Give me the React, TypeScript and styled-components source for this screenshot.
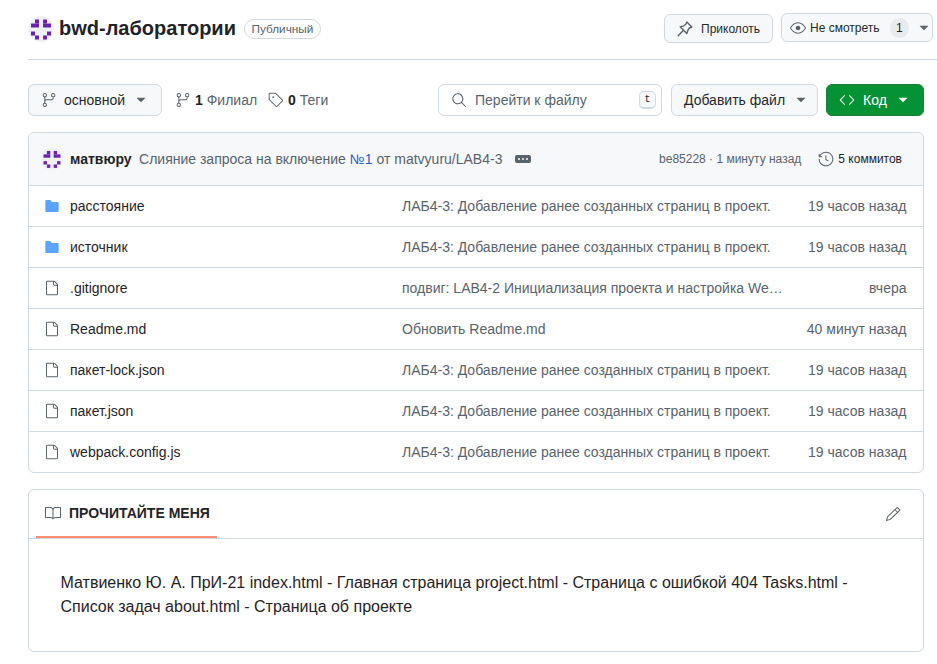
import React from "react";
import styled, { createGlobalStyle } from "styled-components";
import {
  GoEye, GoGitBranch, GoTag, GoSearch, GoCode, GoHistory, GoBook, GoPencil,
  GoFile, GoFileDirectoryFill, GoKebabHorizontal, GoTriangleDown,
} from "react-icons/go";

const Global = createGlobalStyle`
  html, body { margin: 0; padding: 0; background: #fff; }
  body { font-family: "Liberation Sans", Arial, sans-serif; font-size: 14px; color: #1f2328; overflow: hidden; }
  * { box-sizing: border-box; }
`;

const Page = styled.div`
  width: 937px;
  height: 664px;
  padding-left: 28px;
`;

const Header = styled.header`
  height: 60px;
  padding-right: 4px;
  border-bottom: 1px solid #d1d9e0;
  display: flex;
  align-items: flex-start;
  justify-content: space-between;
`;

const TitleGroup = styled.div`
  display: flex;
  align-items: center;
  height: 29px;
  margin-top: 14px;
`;

const AvatarCircle = styled.svg<{ $size: number }>`
  width: ${(p) => p.$size}px;
  height: ${(p) => p.$size}px;
  border-radius: 50%;
  flex: none;
`;

const RepoName = styled.h1`
  font-size: 20px;
  font-weight: 700;
  margin: 0 0 0 5px;
  color: #1f2328;
`;

const Badge = styled.span`
  margin-left: 8px;
  height: 20px;
  padding: 0 6.5px;
  border: 1px solid #d1d9e0;
  border-radius: 10px;
  font-size: 11.8px;
  line-height: 18px;
  color: #59636e;
`;

const HeaderActions = styled.div`
  display: flex;
  gap: 8px;
  margin-top: 13px;
  align-items: flex-start;
`;

const SmallButton = styled.div<{ $width: number; $top?: number }>`
  width: ${(p) => p.$width}px;
  height: 29px;
  margin-top: ${(p) => p.$top ?? 0}px;
  background: #f6f8fa;
  border: 1px solid #d1d9e0;
  border-radius: 6px;
  display: flex;
  align-items: center;
  white-space: nowrap;
  font-size: 12px;
  color: #25292e;
  svg { color: #59636e; flex: none; }
`;

const PinIcon = styled.svg`
  width: 16px;
  height: 16px;
  margin: 0 8px 0 12px;
`;

const Counter = styled.span`
  width: 20px;
  height: 20px;
  border-radius: 10px;
  background: #e8eaee;
  font-size: 12px;
  text-align: center;
  line-height: 20px;
`;

const Toolbar = styled.div`
  height: 32px;
  margin-top: 24px;
  padding-right: 13px;
  display: flex;
  align-items: center;
`;

const Button = styled.div<{ $width: number; $primary?: boolean }>`
  width: ${(p) => p.$width}px;
  height: 32px;
  flex: none;
  border-radius: 6px;
  border: 1px solid ${(p) => (p.$primary ? "#1a7f37" : "#d1d9e0")};
  background: ${(p) => (p.$primary ? "#059235" : "#f6f8fa")};
  color: ${(p) => (p.$primary ? "#fff" : "#25292e")};
  display: flex;
  align-items: center;
  white-space: nowrap;
  svg { flex: none; color: ${(p) => (p.$primary ? "#fff" : "#59636e")}; }
`;

const Stat = styled.div`
  display: flex;
  align-items: center;
  color: #59636e;
  gap: 4px;
  strong { color: #1f2328; font-weight: 700; }
  svg { flex: none; }
`;

const Spacer = styled.div`
  flex: 1;
`;

const Search = styled.div`
  width: 224px;
  height: 32px;
  margin-right: 9px;
  border: 1px solid #d1d9e0;
  border-radius: 6px;
  display: flex;
  align-items: center;
  padding: 0 5px 0 12px;
  color: #59636e;
  gap: 8px;
`;

const Kbd = styled.kbd`
  width: 17px;
  height: 18px;
  margin-left: auto;
  border: 1px solid #d1d9e0;
  border-bottom-width: 2px;
  border-radius: 5px;
  background: #f6f8fa;
  font: 10px/15px "Liberation Mono", monospace;
  text-align: center;
  color: #1f2328;
`;

const FileBox = styled.section`
  width: 896px;
  margin-top: 16px;
  border: 1px solid #d1d9e0;
  border-radius: 6px;
  overflow: hidden;
`;

const CommitBar = styled.div`
  height: 52px;
  background: #f6f8fa;
  display: flex;
  align-items: center;
  padding: 0 21px 0 12px;
  font-size: 14px;
  color: #59636e;
`;

const Author = styled.strong`
  margin-left: 7px;
  color: #1f2328;
  font-size: 14px;
  font-weight: 700;
`;

const CommitMessage = styled.span`
  margin-left: 7.5px;
  a { color: #2f5fd0; }
`;

const Ellipsis = styled.span`
  margin-left: 13px;
  width: 16px;
  height: 8px;
  border-radius: 2px;
  background: #59636e;
  display: flex;
  align-items: center;
  justify-content: center;
  color: #fff;
`;

const CommitMeta = styled.span`
  margin-left: auto;
  font-size: 12px;
`;

const History = styled.span`
  margin-left: 17px;
  display: flex;
  align-items: center;
  gap: 4px;
  color: #1f2328;
  font-size: 12px;
  svg { color: #59636e; }
`;

const Row = styled.div`
  height: 41px;
  border-top: 1px solid #d1d9e0;
  display: grid;
  grid-template-columns: 26px 332px 381px 1fr;
  align-items: center;
  padding: 0 16.5px 0 15px;
`;

const IconCell = styled.span<{ $folder?: boolean }>`
  display: flex;
  color: ${(p) => (p.$folder ? "#5ba3ff" : "#59636e")};
`;

const Name = styled.span`
  color: #1f2328;
`;

const Message = styled.span`
  color: #59636e;
  white-space: nowrap;
`;

const Time = styled.span`
  color: #59636e;
  text-align: right;
  white-space: nowrap;
`;

const Readme = styled.section`
  width: 896px;
  height: 163px;
  margin-top: 16px;
  border: 1px solid #d1d9e0;
  border-radius: 6px;
`;

const ReadmeHead = styled.div`
  height: 49px;
  border-bottom: 1px solid #d1d9e0;
  display: flex;
  justify-content: space-between;
  align-items: stretch;
  padding: 0 22px 0 7px;
`;

const ReadmeTab = styled.div`
  width: 181px;
  height: 48px;
  padding-left: 9px;
  display: flex;
  align-items: center;
  gap: 8px;
  border-bottom: 2px solid #fd8c73;
  font-size: 14px;
  font-weight: 700;
  color: #1f2328;
  svg { color: #59636e; flex: none; }
`;

const EditIcon = styled.span`
  display: flex;
  align-items: center;
  color: #59636e;
`;

const ReadmeBody = styled.p`
  margin: 0;
  padding: 32px 31px 0 31.5px;
  font-size: 16px;
  line-height: 24px;
  color: #1f2328;
`;

const Caret = styled(GoTriangleDown)<{ $gap: number }>`
  margin-left: ${(p) => p.$gap}px;
`;

const Identicon = ({ size }: { size: number }) => {
  const cells = [
    [1, 0], [3, 0],
    [0, 1], [1, 1], [3, 1], [4, 1],
    [0, 3], [4, 3],
    [1, 4], [3, 4],
  ];
  return (
    <AvatarCircle $size={size} viewBox="0 0 26 26">
      <rect width="26" height="26" fill="#eff0f3" />
      {cells.map(([x, y]) => (
        <rect key={`${x}-${y}`} x={3 + x * 4} y={3.5 + y * 4} width="4" height="4" fill="#6a22b4" />
      ))}
    </AvatarCircle>
  );
};

const rows = [
  ["folder", "расстояние", "ЛАБ4-3: Добавление ранее созданных страниц в проект.", "19 часов назад"],
  ["folder", "источник", "ЛАБ4-3: Добавление ранее созданных страниц в проект.", "19 часов назад"],
  ["file", ".gitignore", "подвиг: LAB4-2 Инициализация проекта и настройка We…", "вчера"],
  ["file", "Readme.md", "Обновить Readme.md", "40 минут назад"],
  ["file", "пакет-lock.json", "ЛАБ4-3: Добавление ранее созданных страниц в проект.", "19 часов назад"],
  ["file", "пакет.json", "ЛАБ4-3: Добавление ранее созданных страниц в проект.", "19 часов назад"],
  ["file", "webpack.config.js", "ЛАБ4-3: Добавление ранее созданных страниц в проект.", "19 часов назад"],
];

export default function App() {
  return (
    <Page>
      <Global />
      <Header>
        <TitleGroup>
          <Identicon size={26} />
          <RepoName>bwd-лаборатории</RepoName>
          <Badge>Публичный</Badge>
        </TitleGroup>
        <HeaderActions>
          <SmallButton $width={109} $top={1}>
            <PinIcon viewBox="0 0 16 16" fill="none" stroke="currentColor" strokeWidth="1.4" strokeLinejoin="round" strokeLinecap="round">
              <path d="M9.8 1 14.8 6 12.5 7 11 9 9.8 12.5 3.2 5.8 6.8 4.8 8.8 3.2Z" />
              <path d="M6.3 9.5 1.2 14.8" />
            </PinIcon>
            Приколоть
          </SmallButton>
          <SmallButton $width={152}>
            <GoEye size={16} style={{ marginLeft: 8, marginRight: 4 }} />
            Не смотреть
            <Counter style={{ marginLeft: 10 }}>1</Counter>
            <Caret size={16} $gap={7} />
          </SmallButton>
        </HeaderActions>
      </Header>
      <Toolbar>
        <Button $width={134}>
          <GoGitBranch size={16} style={{ marginLeft: 12, marginRight: 7 }} />
          основной
          <Caret size={16} $gap={8} />
        </Button>
        <Stat style={{ marginLeft: 13 }}>
          <GoGitBranch size={16} />
          <span><strong>1</strong> Филиал</span>
        </Stat>
        <Stat style={{ marginLeft: 11 }}>
          <GoTag size={16} />
          <span><strong>0</strong> Теги</span>
        </Stat>
        <Spacer />
        <Search>
          <GoSearch size={16} />
          Перейти к файлу
          <Kbd>t</Kbd>
        </Search>
        <Button $width={147}>
          <span style={{ marginLeft: 12 }}>Добавить файл</span>
          <Caret size={16} $gap={8} />
        </Button>
        <Button $width={98} $primary style={{ marginLeft: 8 }}>
          <GoCode size={16} style={{ marginLeft: 12, marginRight: 8 }} />
          Код
          <Caret size={16} $gap={8} />
        </Button>
      </Toolbar>
      <FileBox>
        <CommitBar>
          <Identicon size={22} />
          <Author>матвюру</Author>
          <CommitMessage>
            Слияние запроса на включение <a>№1</a> от matvyuru/LAB4-3
          </CommitMessage>
          <Ellipsis>
            <GoKebabHorizontal size={12} />
          </Ellipsis>
          <CommitMeta>be85228 · 1 минуту назад</CommitMeta>
          <History>
            <GoHistory size={16} />
            5 коммитов
          </History>
        </CommitBar>
        {rows.map(([kind, name, msg, time]) => (
          <Row key={name}>
            <IconCell $folder={kind === "folder"}>
              {kind === "folder" ? <GoFileDirectoryFill size={16} /> : <GoFile size={16} />}
            </IconCell>
            <Name>{name}</Name>
            <Message>{msg}</Message>
            <Time>{time}</Time>
          </Row>
        ))}
      </FileBox>
      <Readme>
        <ReadmeHead>
          <ReadmeTab>
            <GoBook size={16} />
            ПРОЧИТАЙТЕ МЕНЯ
          </ReadmeTab>
          <EditIcon>
            <GoPencil size={16} />
          </EditIcon>
        </ReadmeHead>
        <ReadmeBody>
          Матвиенко Ю. А. ПрИ-21 index.html - Главная страница project.html - Страница с ошибкой 404 Tasks.html - Список задач about.html - Страница об проекте
        </ReadmeBody>
      </Readme>
    </Page>
  );
}
